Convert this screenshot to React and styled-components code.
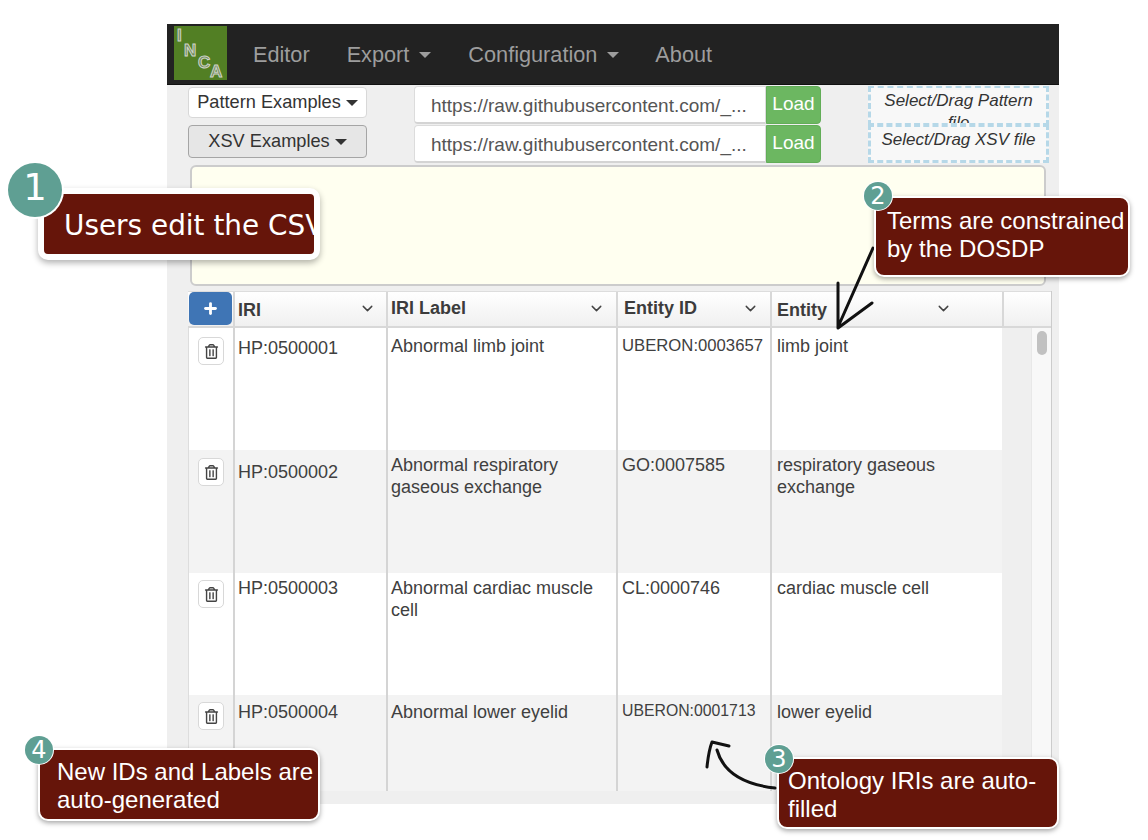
import React from "react";
import styled, { createGlobalStyle } from "styled-components";
import { ChevronDown, Plus } from "lucide-react";
import { FaRegTrashAlt } from "react-icons/fa";

const GlobalStyle = createGlobalStyle`
  html, body {
    margin: 0;
    padding: 0;
    background: #fff;
    font-family: "Liberation Sans", Arial, sans-serif;
  }
  * {
    box-sizing: border-box;
  }
`;

const columns = [
  { title: "IRI", width: 153, chevron: 124, titleTop: 1, left: 3 },
  { title: "IRI Label", width: 230, chevron: 200, titleTop: -1, left: 3 },
  { title: "Entity ID", width: 154, chevron: 124, titleTop: -1, left: 6 },
  { title: "Entity", width: 232, chevron: 163, titleTop: 1, left: 5 },
];

const rows = [
  {
    height: 122,
    btn: 9,
    cells: [
      { text: "HP:0500001", top: 9 },
      { text: "Abnormal limb joint", top: 7 },
      { text: "UBERON:0003657", top: 7, size: 16.7 },
      { text: "limb joint", top: 7 },
    ],
  },
  {
    height: 123,
    btn: 8,
    cells: [
      { text: "HP:0500002", top: 11 },
      { text: "Abnormal respiratory gaseous exchange", top: 4 },
      { text: "GO:0007585", top: 4 },
      { text: "respiratory gaseous exchange", top: 4 },
    ],
  },
  {
    height: 122,
    btn: 7,
    cells: [
      { text: "HP:0500003", top: 4 },
      { text: "Abnormal cardiac muscle cell", top: 4 },
      { text: "CL:0000746", top: 4 },
      { text: "cardiac muscle cell", top: 4 },
    ],
  },
  {
    height: 96,
    btn: 7,
    cells: [
      { text: "HP:0500004", top: 6 },
      { text: "Abnormal lower eyelid", top: 6 },
      { text: "UBERON:0001713", top: 5, size: 15.8 },
      { text: "lower eyelid", top: 6 },
    ],
  },
];

const cellLeft = [3, 3, 4, 5];

const Stage = styled.div`
  position: relative;
  width: 1148px;
  height: 840px;
  padding: 24px 0 0 167px;
  overflow: hidden;
`;

const Frame = styled.div`
  width: 892px;
  height: 780px;
  background: #efefef;
  color: #333;
`;

const Navbar = styled.nav`
  display: flex;
  align-items: center;
  height: 61px;
  padding-left: 7px;
  background: #222;
  border-bottom: 1px solid #111;
`;

const Logo = styled.svg`
  width: 53px;
  height: 54px;
  align-self: flex-start;
  margin-top: 2px;
  background: #527f24;
`;

const LogoLetter = styled.text`
  font-family: "Liberation Sans", Arial, sans-serif;
  font-size: 17px;
  font-weight: 700;
  fill: #71895c;
  stroke: #cfd4c8;
  stroke-width: 1;
`;

const NavLink = styled.a`
  display: flex;
  align-items: center;
  margin: 2px 0 0 ${(p) => p.$left}px;
  font-size: 21.7px;
  color: #9d9d9d;
`;

const Caret = styled.span`
  display: inline-block;
  width: 0;
  height: 0;
  margin-left: ${(p) => p.$gap || 10}px;
  border-top: 6px solid ${(p) => p.$color || "#333"};
  border-left: 6px solid transparent;
  border-right: 6px solid transparent;
`;

const Toolbar = styled.div`
  display: flex;
  height: 80px;
  padding: 1px 0 0 21px;
`;

const ExampleColumn = styled.div`
  display: flex;
  flex-direction: column;
  gap: 7px;
  width: 179px;
  margin: 1px 47px 0 0;
`;

const ExampleButton = styled.button`
  display: flex;
  align-items: center;
  justify-content: center;
  height: ${(p) => (p.$active ? 33 : 31)}px;
  padding: 0;
  font-family: inherit;
  font-size: 18.2px;
  color: #333;
  background: ${(p) => (p.$active ? "#e6e6e6" : "#fff")};
  border: 1px solid ${(p) => (p.$active ? "#a5a5a5" : "#d8d8d8")};
  border-radius: 4px;
`;

const UrlColumn = styled.div`
  display: flex;
  flex-direction: column;
  gap: 1px;
  width: 407px;
  margin-right: 47px;
`;

const UrlRow = styled.div`
  display: flex;
  height: 38px;
`;

const UrlInput = styled.div`
  flex: 1;
  min-width: 0;
  padding: 0 4px 0 16px;
  font-size: 19px;
  line-height: 38px;
  color: #555;
  white-space: nowrap;
  overflow: hidden;
  background: #fff;
  border: 1px solid #dcdcdc;
  border-bottom: 2px solid #d4d4d4;
  border-radius: 4px 0 0 4px;
`;

const LoadButton = styled.button`
  width: 55px;
  padding: 0 0 2px;
  font-family: inherit;
  font-size: 19px;
  color: #fff;
  background: #6cb761;
  border: 1px solid #62ad58;
  border-radius: 0 4px 4px 0;
`;

const DropColumn = styled.div`
  display: flex;
  flex-direction: column;
  width: 181px;
`;

const DropZone = styled.div`
  height: ${(p) => p.$height}px;
  margin-bottom: ${(p) => p.$pull || 0}px;
  padding: ${(p) => p.$pad}px 8px 0;
  font-size: 17px;
  font-style: italic;
  line-height: 22px;
  text-align: center;
  color: #333;
  overflow: hidden;
  background: #f8f8f8;
  border: 3px dashed #b6d8e8;
  border-top-width: ${(p) => (p.$first ? 2 : 3)}px;
`;

const NotesArea = styled.div`
  width: 856px;
  height: 121px;
  margin-left: 23px;
  background: #fffff0;
  border: 2px solid #ccc;
  border-radius: 6px;
`;

const Table = styled.div`
  width: 864px;
  margin: 5px 0 0 21px;
  border-right: 1px solid #ccc;
`;

const HeaderRow = styled.div`
  display: flex;
  height: 37px;
  background: linear-gradient(#fff, #f0f0f0);
  border-top: 1px solid #ddd;
  border-bottom: 2px solid #d8d8d8;
`;

const AddCell = styled.div`
  width: 45px;
  flex: none;
`;

const AddButton = styled.button`
  display: flex;
  align-items: center;
  justify-content: center;
  width: 43px;
  height: 33px;
  margin-left: 1px;
  padding: 0;
  color: #fff;
  background: #3f75b5;
  border: none;
  border-radius: 5px;
`;

const HeaderCell = styled.div`
  position: relative;
  flex: none;
  width: ${(p) => p.$width}px;
  padding: ${(p) => 6 + p.$top}px 0 0 ${(p) => p.$left}px;
  font-size: 18px;
  font-weight: 700;
  line-height: 22px;
  color: #3c3c3c;
  border-left: 2px solid #d8d8d8;
`;

const HeaderChevron = styled(ChevronDown)`
  position: absolute;
  top: 8px;
  left: ${(p) => p.$left}px;
  color: #444;
`;

const HeaderEnd = styled.div`
  flex: 1;
  border-left: 2px solid #d8d8d8;
`;

const TableBody = styled.div`
  display: flex;
`;

const RowList = styled.div`
  width: 814px;
  flex: none;
`;

const Row = styled.div`
  display: flex;
  height: ${(p) => p.$height}px;
  background: ${(p) => (p.$odd ? "#f3f3f3" : "#fff")};
  border-left: 1px solid #ddd;
`;

const ActionCell = styled.div`
  flex: none;
  width: 44px;
  padding: ${(p) => p.$top}px 0 0 9px;
`;

const TrashButton = styled.button`
  display: flex;
  align-items: center;
  justify-content: center;
  width: 26px;
  height: 28px;
  padding: 0;
  color: #444;
  background: #fff;
  border: 1px solid #d8d8d8;
  border-radius: 5px;
`;

const Cell = styled.div`
  flex: none;
  width: ${(p) => p.$width}px;
  padding: ${(p) => p.$top}px 8px 0 ${(p) => p.$left}px;
  font-size: ${(p) => p.$size}px;
  line-height: 22px;
  color: #404040;
  border-left: 2px solid #d4d4d4;
  white-space: ${(p) => (p.$size < 17 ? "nowrap" : "normal")};
`;

const Gutter = styled.div`
  width: 29px;
  flex: none;
  background: #efefef;
`;

const ScrollTrack = styled.div`
  flex: 1;
  padding: 3px 0 0 5px;
  background: #f8f8f8;
  border-left: 1px solid #e8e8e8;
`;

const ScrollThumb = styled.div`
  width: 10px;
  height: 24px;
  background: #c1c1c1;
  border-radius: 5px;
`;

const Callout = styled.div`
  position: absolute;
  left: ${(p) => p.$x}px;
  top: ${(p) => p.$y}px;
  width: ${(p) => p.$w}px;
  height: ${(p) => p.$h}px;
  padding: ${(p) => p.$pad};
  font-size: 24px;
  line-height: 28px;
  color: #fff;
  background: #66150a;
  border: 2px solid #fff;
  border-radius: 10px;
  box-shadow: 0 2px 5px rgba(0, 0, 0, 0.35);
  overflow: hidden;
`;

const FirstCallout = styled(Callout)`
  font-family: "DejaVu Sans", Verdana, sans-serif;
  font-size: 27.9px;
  line-height: 32px;
  white-space: nowrap;
  border-width: 6px;
  box-shadow: 0 3px 6px rgba(0, 0, 0, 0.3);
`;

const Badge = styled.div`
  position: absolute;
  display: flex;
  align-items: center;
  justify-content: center;
  left: ${(p) => p.$x - p.$r}px;
  top: ${(p) => p.$y - p.$r}px;
  width: ${(p) => p.$r * 2}px;
  height: ${(p) => p.$r * 2}px;
  padding-bottom: ${(p) => (p.$r > 20 ? 5 : 0)}px;
  font-family: "DejaVu Sans", Verdana, sans-serif;
  font-size: ${(p) => (p.$r > 20 ? 37 : 24)}px;
  color: #fff;
  background: #5f9f93;
  border-radius: 50%;
  box-shadow: 0 0 0 ${(p) => (p.$r > 20 ? 2 : 1)}px #fff;
`;

const ArrowLayer = styled.svg`
  position: absolute;
  left: 0;
  top: 0;
  width: 1148px;
  height: 840px;
  pointer-events: none;
`;

const ArrowStroke = styled.path`
  fill: none;
  stroke: #111;
  stroke-width: 3px;
  stroke-linecap: round;
  stroke-linejoin: round;
`;

export default function App() {
  return (
    <Stage>
      <GlobalStyle />
      <Frame>
        <Navbar>
          <Logo viewBox="0 0 53 54">
            <LogoLetter x="3" y="15">I</LogoLetter>
            <LogoLetter x="10" y="30">N</LogoLetter>
            <LogoLetter x="24" y="42">C</LogoLetter>
            <LogoLetter x="36" y="51">A</LogoLetter>
          </Logo>
          <NavLink $left={26}>Editor</NavLink>
          <NavLink $left={37}>
            Export
            <Caret $color="#9d9d9d" />
          </NavLink>
          <NavLink $left={37}>
            Configuration
            <Caret $color="#9d9d9d" />
          </NavLink>
          <NavLink $left={36}>About</NavLink>
        </Navbar>
        <Toolbar>
          <ExampleColumn>
            <ExampleButton>
              Pattern Examples
              <Caret $gap={5} />
            </ExampleButton>
            <ExampleButton $active>
              XSV Examples
              <Caret $gap={5} />
            </ExampleButton>
          </ExampleColumn>
          <UrlColumn>
            <UrlRow>
              <UrlInput>https://raw.githubusercontent.com/_...</UrlInput>
              <LoadButton>Load</LoadButton>
            </UrlRow>
            <UrlRow>
              <UrlInput>https://raw.githubusercontent.com/_...</UrlInput>
              <LoadButton>Load</LoadButton>
            </UrlRow>
          </UrlColumn>
          <DropColumn>
            <DropZone $first $height={40} $pad={2} $pull={-2}>
              Select/Drag Pattern file
            </DropZone>
            <DropZone $height={39} $pad={2}>
              Select/Drag XSV file
            </DropZone>
          </DropColumn>
        </Toolbar>
        <NotesArea />
        <Table>
          <HeaderRow>
            <AddCell>
              <AddButton>
                <Plus size={17} strokeWidth={4} />
              </AddButton>
            </AddCell>
            {columns.map((col) => (
              <HeaderCell key={col.title} $width={col.width} $top={col.titleTop} $left={col.left}>
                {col.title}
                <HeaderChevron size={17} $left={col.chevron} />
              </HeaderCell>
            ))}
            <HeaderEnd />
          </HeaderRow>
          <TableBody>
            <RowList>
              {rows.map((row, i) => (
                <Row key={row.cells[0].text} $height={row.height} $odd={i % 2 === 1}>
                  <ActionCell $top={row.btn}>
                    <TrashButton>
                      <FaRegTrashAlt size={15} />
                    </TrashButton>
                  </ActionCell>
                  {row.cells.map((cell, c) => (
                    <Cell
                      key={c}
                      $width={columns[c].width}
                      $top={cell.top}
                      $left={cellLeft[c]}
                      $size={cell.size || 18}
                    >
                      {cell.text}
                    </Cell>
                  ))}
                </Row>
              ))}
            </RowList>
            <Gutter />
            <ScrollTrack>
              <ScrollThumb />
            </ScrollTrack>
          </TableBody>
        </Table>
      </Frame>

      <ArrowLayer viewBox="0 0 1148 840">
        <ArrowStroke d="M873 248 L838 327 M838 283 L838 328 L872 303" />
        <ArrowStroke d="M775 788 C748 785 724 775 717 750 M707 767 C708 757 709 750 712 742 L729 746" />
      </ArrowLayer>

      <FirstCallout $x={38} $y={188} $w={282} $h={72} $pad="16px 0 0 20px">
        Users edit the CSV
      </FirstCallout>
      <Badge $x={35} $y={190} $r={27}>1</Badge>

      <Callout $x={874} $y={196} $w={256} $h={81} $pad="9px 0 0 11px">
        Terms are constrained by the DOSDP
      </Callout>
      <Badge $x={878} $y={196} $r={14}>2</Badge>

      <Callout $x={777} $y={757} $w={282} $h={72} $pad="8px 0 0 9px">
        Ontology IRIs are auto-filled
      </Callout>
      <Badge $x={779} $y={759} $r={14}>3</Badge>

      <Callout $x={38} $y={748} $w={282} $h={73} $pad="8px 0 0 17px">
        New IDs and Labels are auto-generated
      </Callout>
      <Badge $x={39} $y={750} $r={14}>4</Badge>
    </Stage>
  );
}
